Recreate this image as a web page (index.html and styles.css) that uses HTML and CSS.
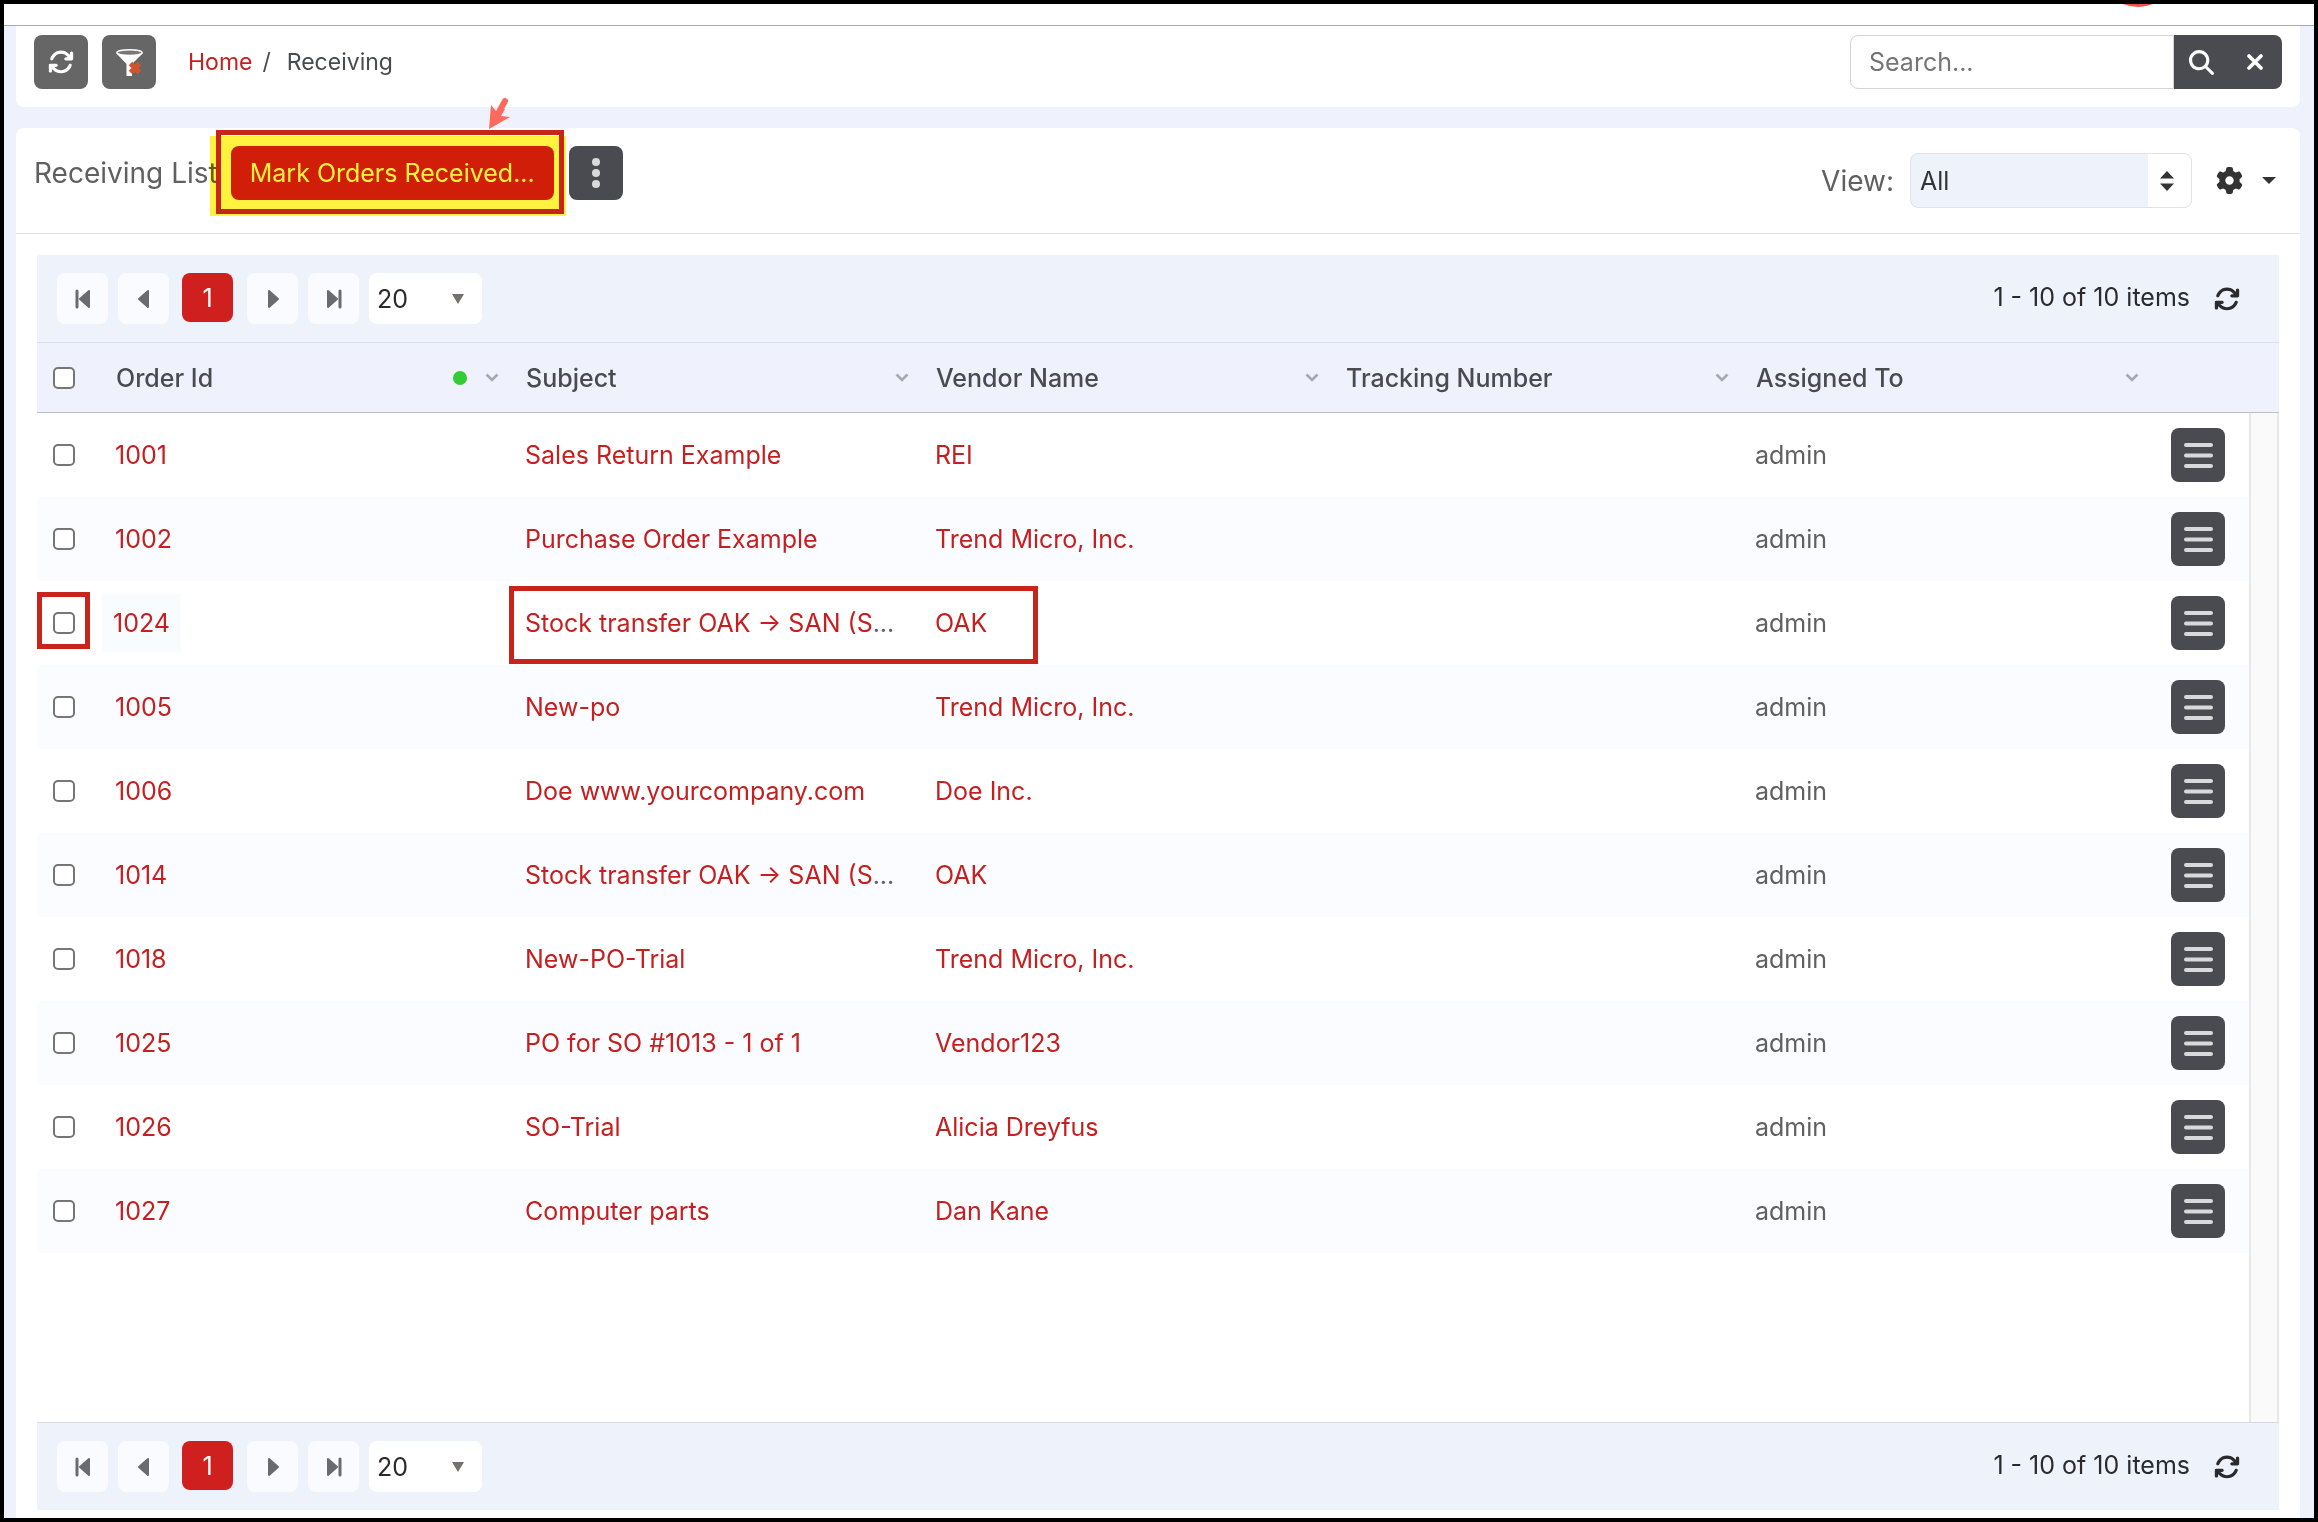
FILE: index.html
```html
<!DOCTYPE html>
<html lang="en">
<head>
    <meta charset="UTF-8">
    <meta name="viewport" content="width=device-width, initial-scale=1.0">
    <title>Receiving</title>
    <link rel="stylesheet" href="styles.css">
</head>
<body>
    <!-- shared icons -->
    <svg class="sprite" aria-hidden="true">
        <symbol id="i-refresh" viewBox="0 0 512 512"><path d="M105.1 202.6c7.7-21.8 20.2-42.3 37.8-59.8c62.5-62.5 163.8-62.5 226.3 0L386.3 160H352c-17.7 0-32 14.3-32 32s14.3 32 32 32H463.5h.4c17.7 0 32-14.3 32-32V80c0-17.7-14.3-32-32-32s-32 14.3-32 32v35.2L414.4 97.6c-87.5-87.5-229.3-87.5-316.8 0C73.2 122 55.6 150.7 44.8 181.4c-5.9 16.7 2.9 34.9 19.5 40.8s34.9-2.9 40.8-19.5zM39 289.3c-5 1.5-9.8 4.2-13.7 8.2c-4 4-6.7 8.8-8.1 14c-.3 1.2-.6 2.5-.8 3.8c-.3 1.7-.4 3.4-.4 5.1V432c0 17.7 14.3 32 32 32s32-14.3 32-32V396.9l17.6 17.5c87.5 87.4 229.3 87.4 316.7 0c24.4-24.4 42.1-53.1 52.9-83.7c5.9-16.7-2.9-34.9-19.5-40.8s-34.9 2.9-40.8 19.5c-7.7 21.8-20.2 42.3-37.8 59.8c-62.5 62.5-163.8 62.5-226.3 0l-.1-.1L125.6 352H160c17.7 0 32-14.3 32-32s-14.3-32-32-32H48.4c-1.6 0-3.2 .1-4.8 .3s-3.1 .5-4.6 1z"/></symbol>
        <symbol id="i-menu" viewBox="0 0 29 25"><path d="M2 2H27M2 12.5H27M2 23H27" stroke="#d9d9dc" stroke-width="4" stroke-linecap="round"/></symbol>
        <symbol id="i-down" viewBox="0 0 14 9"><path d="M1.5 1.5L7 7L12.5 1.5" fill="none" stroke="#a8a8b0" stroke-width="2.6"/></symbol>
        <symbol id="i-first" viewBox="0 0 16 20"><path d="M2 2V18" stroke="#6a6b70" stroke-width="3" stroke-linecap="round"/><path d="M14 2V18L5 10Z" fill="#6a6b70" stroke="#6a6b70" stroke-width="2" stroke-linejoin="round"/></symbol>
        <symbol id="i-prev" viewBox="0 0 16 20"><path d="M12 2V18L3 10Z" fill="#6a6b70" stroke="#6a6b70" stroke-width="2" stroke-linejoin="round"/></symbol>
        <symbol id="i-next" viewBox="0 0 16 20"><path d="M4 2V18L13 10Z" fill="#6a6b70" stroke="#6a6b70" stroke-width="2" stroke-linejoin="round"/></symbol>
        <symbol id="i-last" viewBox="0 0 16 20"><path d="M14 2V18" stroke="#6a6b70" stroke-width="3" stroke-linecap="round"/><path d="M2 2V18L11 10Z" fill="#6a6b70" stroke="#6a6b70" stroke-width="2" stroke-linejoin="round"/></symbol>
    </svg>

    <header class="topbar"><span class="topbar-badge"></span></header>

    <main class="page">
        <div class="toolbar">
            <button type="button" class="btn btn-grey" aria-label="Refresh"><svg class="icon-refresh"><use href="#i-refresh"/></svg></button>
            <button type="button" class="btn btn-grey" aria-label="Clear filter">
                <svg class="icon-filter" viewBox="0 0 27 27">
                    <path d="M0 4L10.500 15V27H16V15L27 4Z" fill="#fff"/>
                    <ellipse cx="13.500" cy="3.600" rx="12.700" ry="2.900" fill="#777" stroke="#fff" stroke-width="1.400"/>
                    <path d="M14.500 14.500L23.500 23.500M23.500 14.500L14.500 23.500" stroke="#d4532f" stroke-width="5"/>
                </svg>
            </button>
            <nav class="breadcrumb">
                <a href="#">Home</a>
                <span class="sep">/</span>
                <span>Receiving</span>
            </nav>
            <form class="search">
                <input type="text" placeholder="Search..." aria-label="Search">
                <button type="button" aria-label="Search">
                    <svg class="icon-search" viewBox="0 0 512 512"><path d="M416 208c0 45.900-14.900 88.300-40 122.700L502.600 457.400c12.500 12.500 12.500 32.800 0 45.300s-32.800 12.500-45.300 0L330.700 376c-34.400 25.200-76.800 40-122.700 40C93.100 416 0 322.900 0 208S93.100 0 208 0S416 93.100 416 208zM208 352a144 144 0 1 0 0-288 144 144 0 1 0 0 288z"/></svg>
                </button>
                <button type="button" aria-label="Clear search">
                    <svg class="icon-close" viewBox="0 0 16 16"><path d="M2 2L14 14M14 2L2 14" stroke="#fff" stroke-width="3.600" stroke-linecap="round"/></svg>
                </button>
            </form>
        </div>

        <section class="panel">
            <div class="panel-header">
                <div class="panel-title">
                    <h1>Receiving List</h1>
                    <div class="marked">
                        <button type="button" class="btn btn-red">Mark Orders Received...</button>
                        <span class="highlight"></span>
                        <span class="outline outline-button"></span>
                        <svg class="pointer" viewBox="0 0 24 34"><path d="M18 5L13 14" stroke="#ff6a5c" stroke-width="6" stroke-linecap="round"/><path d="M2 33L4 9L9 15L14 11L18 13L14 20L23 21Z" fill="#ff6a5c"/></svg>
                    </div>
                    <button type="button" class="btn btn-dark" aria-label="More">
                        <svg class="icon-dots" viewBox="0 0 8 30"><circle cx="4" cy="4" r="4"/><circle cx="4" cy="15" r="4"/><circle cx="4" cy="26" r="4"/></svg>
                    </button>
                </div>
                <div class="view">
                    <label for="viewSelect">View:</label>
                    <div class="select-wrap">
                        <select id="viewSelect"><option>All</option></select>
                        <svg class="icon-sort" viewBox="0 0 14 20"><path d="M7 0L14 7.500H0ZM7 20L14 12.500H0Z"/></svg>
                    </div>
                    <button type="button" class="settings" aria-label="Settings">
                        <svg class="icon-gear" viewBox="0 0 512 512"><path d="M495.9 166.6c3.2 8.7 .5 18.4-6.4 24.6l-43.3 39.4c1.1 8.3 1.7 16.8 1.7 25.4s-.6 17.1-1.7 25.4l43.3 39.4c6.9 6.2 9.6 15.9 6.4 24.6c-4.4 11.9-9.700 23.300-15.800 34.300l-4.700 8.100c-6.600 11-14 21.400-22.100 31.200c-5.900 7.200-15.700 9.600-24.500 6.800l-55.700-17.700c-13.400 10.300-28.200 18.900-44 25.400l-12.500 57.100c-2 9.100-9 16.300-18.200 17.800c-13.800 2.300-28 3.500-42.500 3.500s-28.700-1.200-42.500-3.500c-9.200-1.500-16.200-8.700-18.200-17.800l-12.500-57.100c-15.800-6.500-30.600-15.100-44-25.400L83.100 425.900c-8.800 2.800-18.600 .3-24.500-6.800c-8.100-9.800-15.500-20.200-22.100-31.200l-4.700-8.100c-6.100-11-11.400-22.400-15.800-34.300c-3.200-8.700-.5-18.400 6.400-24.600l43.300-39.400C64.600 273.100 64 264.600 64 256s.6-17.100 1.700-25.400L22.400 191.200c-6.900-6.200-9.600-15.900-6.400-24.600c4.400-11.900 9.700-23.300 15.800-34.300l4.700-8.100c6.600-11 14-21.400 22.100-31.200c5.900-7.200 15.700-9.600 24.500-6.800l55.700 17.700c13.400-10.300 28.200-18.900 44-25.400l12.500-57.100c2-9.100 9-16.300 18.200-17.800C227.300 1.200 241.500 0 256 0s28.700 1.200 42.500 3.500c9.200 1.500 16.200 8.700 18.200 17.800l12.500 57.100c15.800 6.500 30.600 15.100 44 25.400l55.700-17.700c8.800-2.800 18.600-.3 24.500 6.800c8.100 9.800 15.500 20.200 22.100 31.200l4.700 8.100c6.100 11 11.400 22.400 15.800 34.300zM256 336a80 80 0 1 0 0-160 80 80 0 1 0 0 160z"/></svg>
                        <svg class="icon-caret" viewBox="0 0 14 7"><path d="M0 0H14L7 7Z"/></svg>
                    </button>
                </div>
            </div>

            <div class="grid">
                <div class="pager">
                    <button type="button" aria-label="First page"><svg><use href="#i-first"/></svg></button>
                    <button type="button" aria-label="Previous page"><svg><use href="#i-prev"/></svg></button>
                    <button type="button" class="current">1</button>
                    <button type="button" aria-label="Next page"><svg><use href="#i-next"/></svg></button>
                    <button type="button" aria-label="Last page"><svg><use href="#i-last"/></svg></button>
                    <div class="page-size">
                        <select aria-label="Items per page"><option>20</option></select>
                        <svg class="icon-size" viewBox="0 0 12 10"><path d="M0 0H12L6 10Z"/></svg>
                    </div>
                    <span class="pager-info">1 - 10 of 10 items</span>
                    <a href="#" class="pager-refresh" aria-label="Refresh"><svg class="icon-refresh"><use href="#i-refresh"/></svg></a>
                </div>

                <div class="grid-body">
                    <table>
                        <colgroup>
                            <col class="col-check"><col><col><col><col><col><col class="col-menu">
                        </colgroup>
                        <thead>
                            <tr>
                                <th class="check"><input type="checkbox" aria-label="Select all"></th>
                                <th><div class="th">Order Id<i class="dot"></i><svg><use href="#i-down"/></svg></div></th>
                                <th><div class="th">Subject<svg><use href="#i-down"/></svg></div></th>
                                <th><div class="th">Vendor Name<svg><use href="#i-down"/></svg></div></th>
                                <th><div class="th">Tracking Number<svg><use href="#i-down"/></svg></div></th>
                                <th><div class="th">Assigned To<svg><use href="#i-down"/></svg></div></th>
                                <th></th>
                            </tr>
                        </thead>
                        <tbody>
                            <tr>
                                <td class="check"><input type="checkbox" aria-label="Select 1001"></td>
                                <td><a href="#">1001</a></td>
                                <td><a href="#">Sales Return Example</a></td>
                                <td><a href="#">REI</a></td>
                                <td></td>
                                <td>admin</td>
                                <td class="menu"><button type="button" class="btn btn-dark" aria-label="Row menu"><svg class="icon-menu"><use href="#i-menu"/></svg></button></td>
                            </tr>
                            <tr>
                                <td class="check"><input type="checkbox" aria-label="Select 1002"></td>
                                <td><a href="#">1002</a></td>
                                <td><a href="#">Purchase Order Example</a></td>
                                <td><a href="#">Trend Micro, Inc.</a></td>
                                <td></td>
                                <td>admin</td>
                                <td class="menu"><button type="button" class="btn btn-dark" aria-label="Row menu"><svg class="icon-menu"><use href="#i-menu"/></svg></button></td>
                            </tr>
                            <tr>
                                <td class="check"><input type="checkbox" aria-label="Select 1024"><span class="outline outline-check"></span></td>
                                <td class="patched"><a href="#" class="patch">1024</a></td>
                                <td><a href="#">Stock transfer OAK → SAN (S</a>...<span class="outline outline-subject"></span></td>
                                <td><a href="#">OAK</a></td>
                                <td></td>
                                <td>admin</td>
                                <td class="menu"><button type="button" class="btn btn-dark" aria-label="Row menu"><svg class="icon-menu"><use href="#i-menu"/></svg></button></td>
                            </tr>
                            <tr>
                                <td class="check"><input type="checkbox" aria-label="Select 1005"></td>
                                <td><a href="#">1005</a></td>
                                <td><a href="#">New-po</a></td>
                                <td><a href="#">Trend Micro, Inc.</a></td>
                                <td></td>
                                <td>admin</td>
                                <td class="menu"><button type="button" class="btn btn-dark" aria-label="Row menu"><svg class="icon-menu"><use href="#i-menu"/></svg></button></td>
                            </tr>
                            <tr>
                                <td class="check"><input type="checkbox" aria-label="Select 1006"></td>
                                <td><a href="#">1006</a></td>
                                <td><a href="#">Doe www.yourcompany.com</a></td>
                                <td><a href="#">Doe Inc.</a></td>
                                <td></td>
                                <td>admin</td>
                                <td class="menu"><button type="button" class="btn btn-dark" aria-label="Row menu"><svg class="icon-menu"><use href="#i-menu"/></svg></button></td>
                            </tr>
                            <tr>
                                <td class="check"><input type="checkbox" aria-label="Select 1014"></td>
                                <td><a href="#">1014</a></td>
                                <td><a href="#">Stock transfer OAK → SAN (S</a>...</td>
                                <td><a href="#">OAK</a></td>
                                <td></td>
                                <td>admin</td>
                                <td class="menu"><button type="button" class="btn btn-dark" aria-label="Row menu"><svg class="icon-menu"><use href="#i-menu"/></svg></button></td>
                            </tr>
                            <tr>
                                <td class="check"><input type="checkbox" aria-label="Select 1018"></td>
                                <td><a href="#">1018</a></td>
                                <td><a href="#">New-PO-Trial</a></td>
                                <td><a href="#">Trend Micro, Inc.</a></td>
                                <td></td>
                                <td>admin</td>
                                <td class="menu"><button type="button" class="btn btn-dark" aria-label="Row menu"><svg class="icon-menu"><use href="#i-menu"/></svg></button></td>
                            </tr>
                            <tr>
                                <td class="check"><input type="checkbox" aria-label="Select 1025"></td>
                                <td><a href="#">1025</a></td>
                                <td><a href="#">PO for SO #1013 - 1 of 1</a></td>
                                <td><a href="#">Vendor123</a></td>
                                <td></td>
                                <td>admin</td>
                                <td class="menu"><button type="button" class="btn btn-dark" aria-label="Row menu"><svg class="icon-menu"><use href="#i-menu"/></svg></button></td>
                            </tr>
                            <tr>
                                <td class="check"><input type="checkbox" aria-label="Select 1026"></td>
                                <td><a href="#">1026</a></td>
                                <td><a href="#">SO-Trial</a></td>
                                <td><a href="#">Alicia Dreyfus</a></td>
                                <td></td>
                                <td>admin</td>
                                <td class="menu"><button type="button" class="btn btn-dark" aria-label="Row menu"><svg class="icon-menu"><use href="#i-menu"/></svg></button></td>
                            </tr>
                            <tr>
                                <td class="check"><input type="checkbox" aria-label="Select 1027"></td>
                                <td><a href="#">1027</a></td>
                                <td><a href="#">Computer parts</a></td>
                                <td><a href="#">Dan Kane</a></td>
                                <td></td>
                                <td>admin</td>
                                <td class="menu"><button type="button" class="btn btn-dark" aria-label="Row menu"><svg class="icon-menu"><use href="#i-menu"/></svg></button></td>
                            </tr>
                        </tbody>
                    </table>
                    <div class="scroll">
                        <div class="scroll-head"></div>
                        <div class="scroll-track"></div>
                    </div>
                </div>

                <div class="pager">
                    <button type="button" aria-label="First page"><svg><use href="#i-first"/></svg></button>
                    <button type="button" aria-label="Previous page"><svg><use href="#i-prev"/></svg></button>
                    <button type="button" class="current">1</button>
                    <button type="button" aria-label="Next page"><svg><use href="#i-next"/></svg></button>
                    <button type="button" aria-label="Last page"><svg><use href="#i-last"/></svg></button>
                    <div class="page-size">
                        <select aria-label="Items per page"><option>20</option></select>
                        <svg class="icon-size" viewBox="0 0 12 10"><path d="M0 0H12L6 10Z"/></svg>
                    </div>
                    <span class="pager-info">1 - 10 of 10 items</span>
                    <a href="#" class="pager-refresh" aria-label="Refresh"><svg class="icon-refresh"><use href="#i-refresh"/></svg></a>
                </div>
            </div>
        </section>
    </main>
</body>
</html>
```
FILE: styles.css
```css
* {
    box-sizing: border-box;
}

body {
    margin: 0;
    min-height: 100vh;
    display: flex;
    flex-direction: column;
    border: 4px solid #000;
    background-color: #eff1fc;
    color: #606060;
    font-family: Inter, "Liberation Sans", sans-serif;
    font-size: 25px;
    line-height: 30px;
}

button, input, select {
    font: inherit;
}

button {
    border: none;
    padding: 0;
    cursor: pointer;
}

svg {
    display: block;
    flex: none;
}

a {
    color: #c5201f;
    text-decoration: none;
}

.sprite {
    position: absolute;
    width: 0;
    height: 0;
}

.topbar {
    position: relative;
    height: 22px;
    overflow: hidden;
    background: white;
    border-bottom: 1px solid #a9a9ad;
}

.topbar-badge {
    position: absolute;
    top: -75px;
    right: 137px;
    width: 78px;
    height: 78px;
    border-radius: 50%;
    background: #f0524a;
}

.page {
    flex: 1;
    display: flex;
    flex-direction: column;
    gap: 21px;
    padding: 0 14px 0 12px;
}

/* toolbar */
.toolbar {
    display: flex;
    align-items: center;
    gap: 14px;
    padding: 9px 18px 18px;
    background: white;
    border-radius: 0 0 8px 8px;
}

.btn {
    display: flex;
    justify-content: center;
    align-items: center;
    width: 54px;
    height: 54px;
    border-radius: 8px;
    color: white;
}

.btn-grey {
    background-color: #666;
}

.btn-dark {
    background-color: #4a4b50;
}

.btn-red {
    width: auto;
    padding: 0 18px;
    background-color: #d01f1f;
}

.icon-refresh {
    width: 26px;
    height: 26px;
    fill: currentColor;
}

.icon-filter {
    width: 27px;
    height: 27px;
}

.breadcrumb {
    display: flex;
    padding-left: 18px;
    color: #4a4b50;
    font-size: 23px;
}

.sep {
    padding: 0 16px 0 10px;
}

.search {
    display: flex;
    margin-left: auto;
}

.search input {
    width: 324px;
    height: 54px;
    padding: 0 18px;
    border: 1px solid #d3d3d6;
    border-radius: 8px 0 0 8px;
    background: white;
    color: #333;
}

.search input::placeholder {
    color: #757575;
}

.search button {
    display: flex;
    justify-content: center;
    align-items: center;
    width: 54px;
    height: 54px;
    background: #4a4b50;
}

.search button:last-child {
    border-radius: 0 8px 8px 0;
}

.icon-search {
    width: 25px;
    height: 25px;
    fill: white;
}

.icon-close {
    width: 16px;
    height: 16px;
}

/* list panel */
.panel {
    flex: 1;
    display: flex;
    flex-direction: column;
    background: white;
    border-radius: 8px 8px 0 0;
}

.panel-header {
    display: flex;
    justify-content: space-between;
    padding: 18px 18px 25px;
    border-bottom: 1px solid #e2e3e6;
}

.panel-title {
    display: flex;
    align-items: center;
    align-self: flex-start;
}

h1 {
    margin: 0 13px 0 0;
    font-size: 28px;
    font-weight: 400;
}

.marked {
    position: relative;
    margin-right: 15px;
}

.btn-red {
    padding: 0 19px;
}

.highlight {
    position: absolute;
    top: -10px;
    right: -12px;
    bottom: -16px;
    left: -21px;
    background: #fff33f;
    mix-blend-mode: multiply;
    pointer-events: none;
}

.outline {
    position: absolute;
    border: 5px solid #c9241b;
    pointer-events: none;
}

.outline-button {
    top: -16px;
    right: -10px;
    bottom: -14px;
    left: -15px;
}

.pointer {
    position: absolute;
    right: 43px;
    bottom: 70px;
    width: 24px;
    height: 34px;
}

.icon-dots {
    width: 8px;
    height: 30px;
    fill: #d9d9dc;
}

.view {
    display: flex;
    align-items: center;
    padding-top: 7px;
    font-size: 28px;
}

.select-wrap {
    position: relative;
    margin: 0 24px 0 16px;
}

.select-wrap select {
    appearance: none;
    display: block;
    width: 282px;
    height: 55px;
    padding: 0 52px 0 9px;
    border: 1px solid #dfe2e8;
    border-radius: 8px;
    background: linear-gradient(to left, white 43px, #eef2fb 43px);
    color: #333;
    font-size: 25px;
}

.icon-sort {
    position: absolute;
    top: 18px;
    right: 18px;
    width: 14px;
    height: 20px;
    fill: #333;
    pointer-events: none;
}

.settings {
    display: flex;
    align-items: center;
    gap: 19px;
    padding-right: 6px;
    background: none;
    fill: #333;
}

.icon-gear {
    width: 27px;
    height: 27px;
}

.icon-caret {
    width: 14px;
    height: 7px;
}

/* grid */
.grid {
    flex: 1;
    display: flex;
    flex-direction: column;
    margin: 21px 21px 8px;
}

.pager {
    display: flex;
    align-items: center;
    gap: 10px;
    padding: 18px 39px 18px 20px;
    background: #eef2fb;
    color: #2b2b2e;
}

.pager > button {
    display: flex;
    justify-content: center;
    align-items: center;
    width: 51px;
    height: 51px;
    border-radius: 8px;
    background: #fafbfe;
}

.pager > button svg {
    width: 16px;
    height: 20px;
}

.pager .current {
    height: 49px;
    margin: 0 4px 2px 3px;
    background: #d01f1f;
    color: white;
}

.page-size {
    position: relative;
}

.page-size select {
    appearance: none;
    display: block;
    width: 113px;
    height: 51px;
    padding: 0 36px 0 8px;
    border: none;
    border-radius: 8px;
    background: white;
    color: #2b2b2e;
}

.icon-size {
    position: absolute;
    top: 21px;
    right: 18px;
    width: 12px;
    height: 10px;
    fill: #75706f;
    pointer-events: none;
}

.pager-info {
    margin: 0 14px 4px auto;
}

.pager-refresh {
    color: #2b2b2e;
}

.grid-body {
    flex: 1;
    display: flex;
    align-items: stretch;
    border-top: 1px solid #dcdfeb;
    border-bottom: 1px solid #d5d9e6;
}

table {
    flex: 1;
    align-self: flex-start;
    width: 100%;
    table-layout: fixed;
    border-collapse: separate;
    border-spacing: 0;
}

.col-check {
    width: 64px;
}

.col-menu {
    width: 98px;
}

th {
    height: 70px;
    padding: 0 12px 0 15px;
    background: #eff1fc;
    border-bottom: 1px solid #bdbec6;
    color: #4a4b50;
    font-weight: 500;
    text-align: left;
}

.th {
    display: flex;
    align-items: center;
}

.th svg {
    width: 14px;
    height: 9px;
    margin-left: auto;
}

.dot {
    width: 14px;
    height: 14px;
    margin-left: auto;
    border-radius: 50%;
    background: #32cd32;
}

.th .dot + svg {
    margin-left: 18px;
}

td {
    position: relative;
    height: 84px;
    padding: 0 14px;
    white-space: nowrap;
}

tbody tr:nth-child(even) {
    background: #fbfcff;
}

.check {
    padding: 0 0 0 16px;
}

input[type="checkbox"] {
    appearance: none;
    display: block;
    width: 22px;
    height: 22px;
    margin: 0;
    border: 2px solid #767676;
    border-radius: 5px;
    background: white;
}

.menu {
    padding: 0 0 0 20px;
}

.icon-menu {
    width: 29px;
    height: 25px;
}

.patched {
    padding-left: 1px;
}

.patch {
    display: inline-block;
    padding: 14px 11px;
    background: #f8fcff;
}

.outline-check {
    top: 11px;
    left: 0;
    width: 53px;
    height: 57px;
}

.outline-subject {
    top: 5px;
    left: -2px;
    width: 529px;
    height: 78px;
    z-index: 1;
}

.scroll {
    flex: none;
    display: flex;
    flex-direction: column;
    width: 30px;
}

.scroll-head {
    height: 70px;
    background: #eff1fc;
    border-bottom: 1px solid #bdbec6;
}

.scroll-track {
    flex: 1;
    border: solid #e8e8e8;
    border-width: 0 2px;
    background: #fafafa;
}
```
